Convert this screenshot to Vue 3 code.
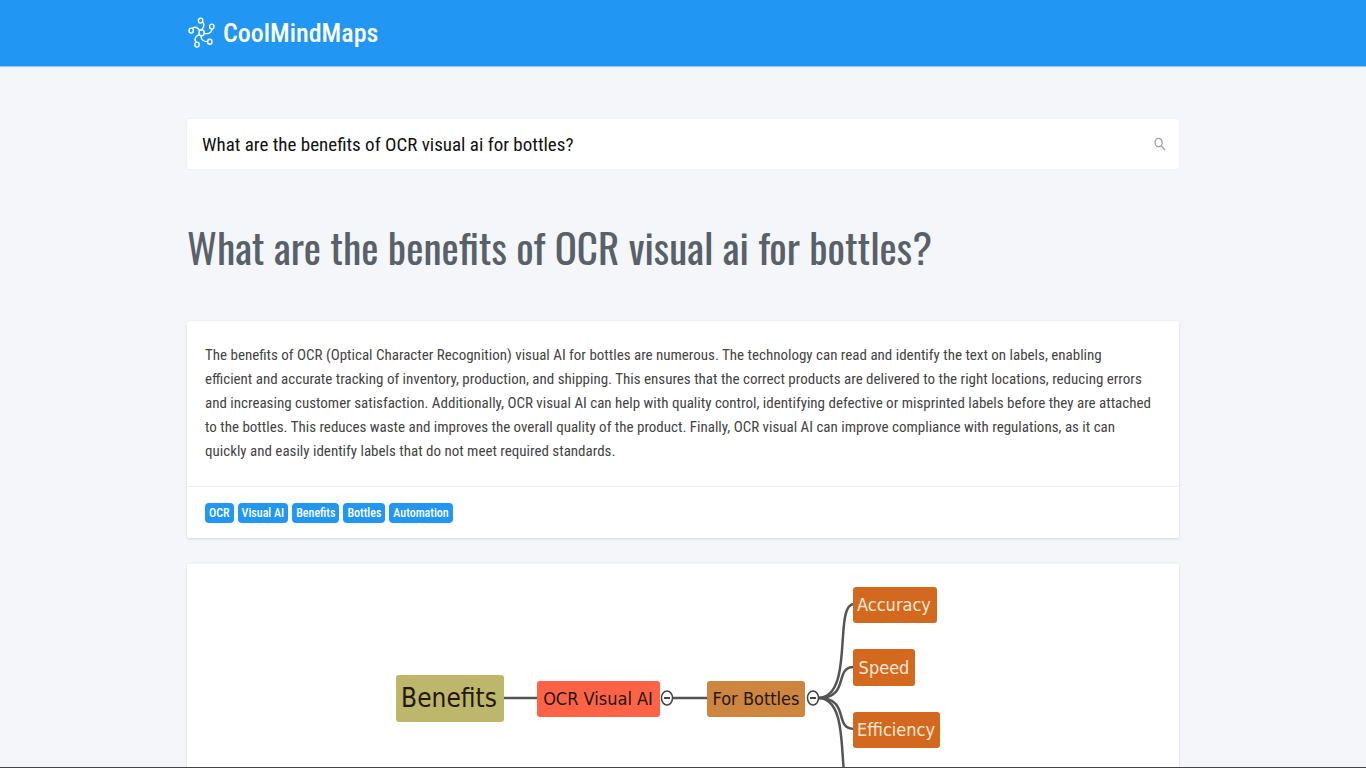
<script setup>
import { ref } from 'vue'

const question = 'What are the benefits of OCR visual ai for bottles?'
const query = ref(question)
const tags = ['OCR', 'Visual AI', 'Benefits', 'Bottles', 'Automation']
</script>

<template>
  <div class="page">
    <header class="topbar">
      <div class="container">
        <a class="brand" href="#">
          <svg class="logo" viewBox="0 0 28 32" aria-hidden="true">
            <g fill="none" stroke="currentColor" stroke-width="1.4" stroke-linecap="round">
              <ellipse cx="14.6" cy="15.8" rx="2.6" ry="3" />
              <ellipse cx="13.6" cy="3.6" rx="2.2" ry="2.5" />
              <ellipse cx="24.8" cy="9.6" rx="2.2" ry="2.5" />
              <ellipse cx="4.2" cy="13.6" rx="2.2" ry="2.5" />
              <ellipse cx="22.8" cy="24.8" rx="2.2" ry="2.5" />
              <ellipse cx="10" cy="27.6" rx="2.2" ry="2.5" />
              <path d="M15.4 5C18.6 7.6 16.4 10.4 14.8 12.8" />
              <path d="M24.9 12.3C24.6 16.2 21 17.2 17.3 16.4" />
              <path d="M5.4 11.4C8 9 11 10.6 12.6 13.6" />
              <path d="M14.2 18.9C13.6 22.9 17 24.6 20.4 24.6" />
              <path d="M9 25C6.6 21.6 8.8 19 12.2 17.6" />
            </g>
          </svg>
          <span>CoolMindMaps</span>
        </a>
      </div>
    </header>

    <main class="container content">
      <form class="search" role="search" @submit.prevent>
        <input v-model="query" type="text" aria-label="Question" />
        <button type="submit" aria-label="Search">
          <svg viewBox="0 0 12 14" aria-hidden="true">
            <g fill="none" stroke="currentColor" stroke-width="1.3">
              <ellipse cx="4.6" cy="5.6" rx="3.6" ry="4.2" />
              <path d="M7.2 8.8L11.2 13.4" />
            </g>
          </svg>
        </button>
      </form>

      <h1>{{ question }}</h1>

      <article class="card">
        <p>
          The benefits of OCR (Optical Character Recognition) visual AI for bottles are numerous. The
          technology can read and identify the text on labels, enabling<br />
          efficient and accurate tracking of inventory, production, and shipping. This ensures that
          the correct products are delivered to the right locations, reducing errors and increasing
          customer satisfaction. Additionally, OCR visual AI can help with quality control,
          identifying defective or misprinted labels before they are attached to the bottles. This
          reduces waste and improves the overall quality of the product. Finally, OCR visual AI can
          improve compliance with regulations, as it can quickly and easily identify labels that do
          not meet required standards.
        </p>
        <div class="tags">
          <a v-for="tag in tags" :key="tag" href="#">{{ tag }}</a>
        </div>
      </article>

      <section class="card map" aria-label="Mind map">
        <svg viewBox="0 0 992 320">
          <g class="links">
            <path d="M316 134H350" />
            <path d="M485 134H520" />
            <path d="M631 134C668 134 646 40 667 40" />
            <path d="M631 134C664 134 646 103 667 103" />
            <path d="M631 134C664 134 646 165 667 165" />
            <path d="M631 134C668 134 646 228 667 228" />
          </g>
          <g class="toggles">
            <ellipse cx="480" cy="134" rx="5.5" ry="7" />
            <path d="M477 134H483" />
            <ellipse cx="626" cy="134" rx="5.5" ry="7" />
            <path d="M623 134H629" />
          </g>
          <rect class="root" x="209" y="111" width="108" height="47" rx="3" />
          <rect class="topic" x="350" y="117" width="123" height="36" rx="3" />
          <rect class="branch" x="520" y="117" width="98" height="36" rx="3" />
          <g class="leaf">
            <rect x="666" y="23" width="84" height="36" rx="3" />
            <rect x="666" y="85" width="62" height="37" rx="3" />
            <rect x="666" y="148" width="87" height="36" rx="3" />
            <rect x="666" y="210" width="84" height="37" rx="3" />
          </g>
          <g class="labels">
            <text class="root-label" x="262" y="143">Benefits</text>
            <text x="411" y="141">OCR Visual AI</text>
            <text x="569" y="141">For Bottles</text>
            <g class="leaf-labels">
              <text x="707" y="47">Accuracy</text>
              <text x="697" y="110">Speed</text>
              <text x="709" y="172">Efficiency</text>
            </g>
          </g>
        </svg>
      </section>
    </main>
  </div>
</template>

<style>
body {
  margin: 0;
  background: #f4f6f9;
}
</style>

<style scoped>
.page {
  box-sizing: border-box;
  height: 100vh;
  overflow: hidden;
  border-bottom: 1px solid #444;
  background: #f4f6f9;
  color: #444;
  font-family: "Roboto Condensed", Roboto, "Liberation Sans", sans-serif;
}
.container {
  width: calc(100% - 32px);
  max-width: 992px;
  margin: 0 auto;
}
.topbar {
  background: #2196f3;
  border-bottom: 1px solid #90c9f6;
}
.brand {
  display: flex;
  align-items: center;
  gap: 8px;
  height: 66px;
  color: #fff;
  font-size: 26px;
  font-weight: 500;
  line-height: 32px;
  text-decoration: none;
}
.logo {
  width: 28px;
  height: 32px;
}
.search {
  display: flex;
  align-items: center;
  height: 50px;
  margin-top: 52px;
  background: #fff;
  border-radius: 2px;
  box-shadow: 0 0 2px rgba(0, 0, 0, 0.1);
}
.search input {
  flex: 1;
  min-width: 0;
  padding: 0 15px;
  border: 0;
  outline: 0;
  background: transparent;
  color: #111;
  font: 19px "Roboto Condensed", Roboto, "Liberation Sans", sans-serif;
}
.search button {
  display: flex;
  padding: 0 13px;
  border: 0;
  background: transparent;
  color: #a0a0a0;
}
.search button svg {
  width: 12px;
  height: 14px;
}
h1 {
  margin: 46px 0 42px;
  color: #586169;
  font: 400 41px/64px Oswald, "Roboto Condensed", sans-serif;
}
.card {
  margin-bottom: 26px;
  background: #fff;
  border-radius: 2px;
  box-shadow: 0 1px 3px rgba(0, 0, 0, 0.12);
}
.card p {
  margin: 0;
  padding: 22px 22px 23px 18px;
  font-size: 15px;
  line-height: 24px;
}
.tags {
  display: flex;
  flex-wrap: wrap;
  gap: 4px;
  padding: 16px 18px 15px;
  border-top: 1px solid #eef0f2;
}
.tags a {
  padding: 0 4px;
  border-radius: 4px;
  background: #2196f3;
  color: #fff;
  font-size: 12px;
  font-weight: 500;
  line-height: 20px;
  text-decoration: none;
}
.map svg {
  display: block;
  width: 100%;
}
.links {
  fill: none;
  stroke: #555;
  stroke-width: 2.5;
}
.toggles {
  fill: #fff;
  stroke: #444;
  stroke-width: 1.5;
}
.toggles path { stroke-width: 2; }
.root { fill: #bdb76b; }
.topic { fill: #ff6347; }
.branch { fill: #cd853f; }
.leaf { fill: #d2691e; }
.labels {
  fill: #24180c;
  font-family: "DejaVu Sans Condensed", "DejaVu Sans", sans-serif;
  font-size: 18px;
  text-anchor: middle;
}
.root-label { font-size: 26px; }
.leaf-labels { fill: #ffe9d6; }
</style>
